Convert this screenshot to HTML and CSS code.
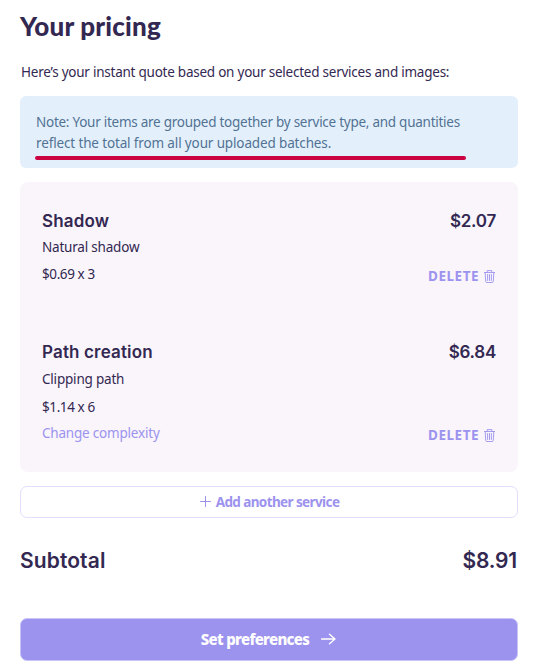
FILE: index.html
```
<!DOCTYPE html>
<html lang="en">
<head>
    <meta charset="UTF-8">
    <meta name="viewport" content="width=device-width, initial-scale=1.0">
    <title>Your pricing</title>
    <link rel="stylesheet" href="styles.css">
</head>
<body>
    <main class="pricing">
        <h1>Your pricing</h1>
        <p class="intro">Here’s your instant quote based on your selected services and images:</p>

        <div class="note">
            <p>Note: Your items are grouped together by service type, and quantities</p>
            <p class="last">reflect the total from all your uploaded batches.</p>
            <div class="underline"></div>
        </div>

        <ul class="services">
            <li class="shadow">
                <div class="info">
                    <h2>Shadow</h2>
                    <p class="type">Natural shadow</p>
                    <p class="qty">$0.69 x 3</p>
                </div>
                <div class="side">
                    <strong>$2.07</strong>
                    <button class="delete"><span>DELETE</span>
                        <svg width="11" height="13" viewBox="0 0 11 13"><path d="M0 2.5h11M3.2 2.5V.6h4.6v1.9M1.2 2.5l.5 8.9q.1 1.1 1.1 1.1h5.4q1 0 1.1-1.1l.5-8.9M3.6 4.5v6M5.5 4.5v6M7.4 4.5v6"/></svg>
                    </button>
                </div>
            </li>
            <li class="path">
                <div class="info">
                    <h2>Path creation</h2>
                    <p class="type">Clipping path</p>
                    <p class="qty">$1.14 x 6</p>
                    <a class="change">Change complexity</a>
                </div>
                <div class="side">
                    <strong>$6.84</strong>
                    <button class="delete"><span>DELETE</span>
                        <svg width="11" height="13" viewBox="0 0 11 13"><path d="M0 2.5h11M3.2 2.5V.6h4.6v1.9M1.2 2.5l.5 8.9q.1 1.1 1.1 1.1h5.4q1 0 1.1-1.1l.5-8.9M3.6 4.5v6M5.5 4.5v6M7.4 4.5v6"/></svg>
                    </button>
                </div>
            </li>
        </ul>

        <button class="add">
            <svg width="11" height="11" viewBox="0 0 11 11"><path d="M5.5 .5v10M.5 5.5h10"/></svg>
            <span>Add another service</span>
        </button>

        <div class="subtotal">
            <span class="label">Subtotal</span>
            <span class="total">$8.91</span>
        </div>

        <button class="next">
            <span>Set preferences</span>
            <svg width="15" height="12" viewBox="0 0 15 12"><path d="M.5 6h13.5M8.5 1.2L14 6l-5.5 4.8"/></svg>
        </button>
    </main>
</body>
</html>
```
FILE: styles.css
```
* { margin:0; padding:0; box-sizing:border-box;}
ul { list-style:none;}
body { background:#fff; color:#332851; font-family:"Noto Sans", sans-serif; font-size:13.5px; letter-spacing:-0.2px;}
button { border:0; background:none; font-family:inherit; cursor:pointer;}
svg { fill:none; stroke:currentColor; stroke-width:1; stroke-linecap:round; stroke-linejoin:round; flex:none;}

.pricing { width:498px; margin-left:20px; padding-top:9px; white-space:nowrap;}
h1 { font-family:Lato, sans-serif; font-size:26px; font-weight:900; line-height:34px; letter-spacing:0.2px;}
.intro { margin-top:19px; padding-left:1px; line-height:20px; letter-spacing:-0.24px;}

.note { height:72px; margin-top:14px; padding:16px 16px 0; border-radius:6px; background:#e3f0fc; color:#527293; letter-spacing:-0.26px;}
.note p { line-height:21px;}
.note .last { letter-spacing:-0.14px;}
.underline { width:431px; height:4px; margin:2px 0 0 -1px; border-radius:2px; background:#cc0341;}

.services { height:290px; margin-top:14px; padding:27px 21px 0 22px; border-radius:8px; background:#f9f5fb;}
.services li { display:flex; justify-content:space-between;}
.shadow { height:76px; margin-bottom:55px;}
.path { height:104px;}
h2, .side strong { font-family:Inter, sans-serif; font-size:17px; font-weight:600; line-height:24px;}
h2 { letter-spacing:0.15px;}
.side strong { margin-right:1px; letter-spacing:-0.25px;}
.type { margin-top:4px; line-height:20px;}
.qty { margin-top:7px; line-height:20px; letter-spacing:-0.4px;}
.path .type { margin-top:5px;}
.path .qty { margin-top:8px;}
.change { display:block; margin-top:6px; line-height:20px; color:#9c93ee;}
.side { display:flex; flex-direction:column; justify-content:space-between; align-items:flex-end;}
.delete { display:flex; align-items:center; gap:5px; height:18px; margin-right:2px; color:#9c93ee; font-size:13.5px; font-weight:700; letter-spacing:0.5px;}
.delete svg { stroke-width:0.9;}

.add { display:flex; justify-content:center; align-items:center; gap:5px; width:100%; height:32px; margin-top:14px; padding-left:1px; border:1px solid #e2defb; border-radius:7px; color:#9c93ee; font-size:13.5px; font-weight:700; letter-spacing:-0.6px;}
.add svg { margin-bottom:2px;}
.subtotal { display:flex; justify-content:space-between; margin-top:28px; font-family:Inter, sans-serif; font-size:21px; font-weight:600; line-height:30px; letter-spacing:0.1px;}
.total { margin-right:1px; letter-spacing:-0.2px;}
.next { display:flex; justify-content:center; align-items:center; gap:12px; width:100%; height:43px; margin-top:42px; padding:0 1px 2px 0; border:1px solid #c9c3f7; border-radius:7px; background:#9c93ee; color:#fff; font-size:15px; font-weight:800; letter-spacing:-0.68px;}
.next svg { stroke-width:1.4;}
```
